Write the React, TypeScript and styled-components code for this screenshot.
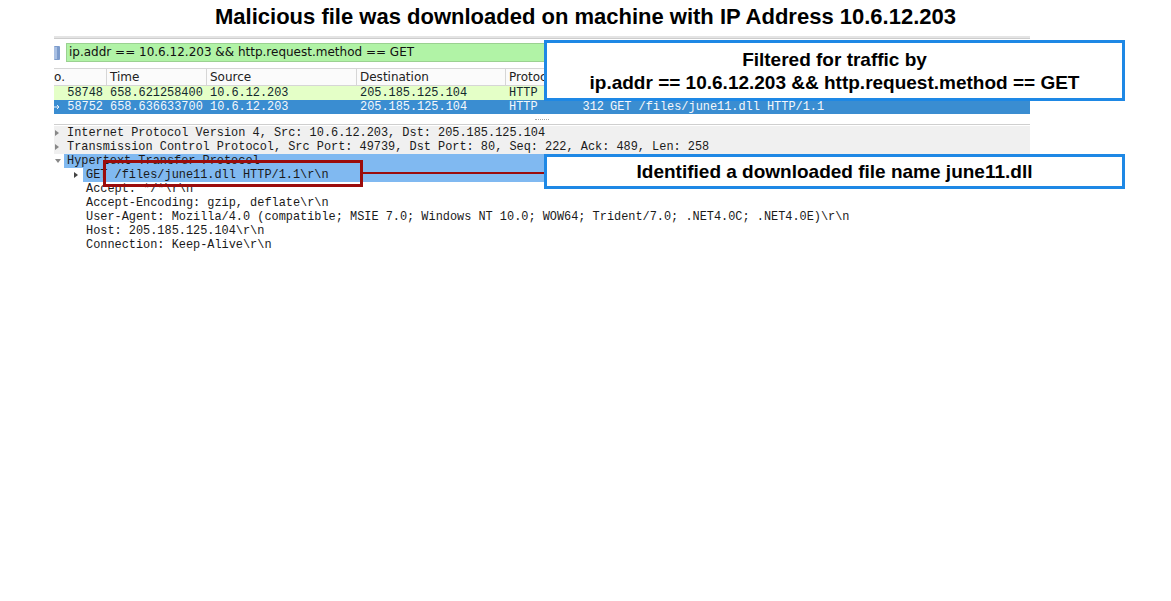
import React from "react";
import styled, { createGlobalStyle } from "styled-components";

const Global = createGlobalStyle`
  html, body { margin: 0; padding: 0; background: #ffffff; }
  body { font-family: "Liberation Sans", Arial, sans-serif; }
`;

const Page = styled.div`
  position: relative;
  width: 1171px;
  height: 601px;
  overflow: hidden;
  background: #fff;
`;

const Title = styled.h1`
  margin: 0;
  height: 36px;
  line-height: 34px;
  text-align: center;
  font-family: "Liberation Sans", Arial, sans-serif;
  font-weight: 700;
  font-size: 22px;
  color: #000;
`;

const Capture = styled.div`
  margin-left: 54px;
  width: 976px;
  display: flex;
  flex-direction: column;
`;

const TopRule = styled.div`
  height: 2px;
  background: #e4e4e4;
  border-bottom: 1px solid #cdcdcd;
`;

const FilterRow = styled.div`
  display: flex;
  align-items: stretch;
  height: 19px;
  margin-top: 4px;
  gap: 3px;
`;

const BookmarkBox = styled.div`
  width: 9px;
  display: flex;
  align-items: center;
`;

const FilterInput = styled.div`
  flex: 1;
  background: #b1f3a6;
  border: 1px solid #9bd191;
  box-sizing: border-box;
  padding-left: 2px;
  font-family: "DejaVu Sans", sans-serif;
  font-size: 12px;
  line-height: 17px;
  color: #111;
  white-space: nowrap;
`;

const ListHeader = styled.div`
  display: grid;
  grid-template-columns: 53px 100px 150px 149px 54px 47px 1fr;
  height: 18px;
  margin-top: 6px;
  border-top: 1px solid #d6d6d6;
  border-bottom: 1px solid #d6d6d6;
  box-sizing: border-box;
  background: #fbfbfb;
`;

const HeadCell = styled.div<{ $flush?: boolean }>`
  font-family: "DejaVu Sans", sans-serif;
  font-size: 12px;
  line-height: 16px;
  color: #222;
  padding-left: ${(p) => (p.$flush ? "0" : "3px")};
  border-right: 1px solid #d6d6d6;
  white-space: nowrap;
  overflow: hidden;
`;

const PacketRow = styled.div<{ $bg: string; $fg: string }>`
  display: grid;
  grid-template-columns: 53px 100px 150px 149px 54px 47px 1fr;
  height: 14px;
  background: ${(p) => p.$bg};
  color: ${(p) => p.$fg};
  font-family: "Liberation Mono", monospace;
  font-size: 11.9px;
  line-height: 14px;
  white-space: nowrap;
`;

const Cell = styled.div<{ $right?: boolean }>`
  display: flex;
  justify-content: ${(p) => (p.$right ? "flex-end" : "flex-start")};
  align-items: center;
  padding: ${(p) => (p.$right ? "0 3px 0 0" : "0 0 0 3px")};
  overflow: hidden;
`;

const NoCell = styled.div`
  display: flex;
  justify-content: space-between;
  align-items: center;
  padding-right: 4px;
`;

const Splitter = styled.div`
  height: 10px;
  display: flex;
  justify-content: center;
  align-items: flex-start;
  border-bottom: 1px solid #cfcfcf;
  box-sizing: border-box;
  margin-top: 1px;
`;

const Grip = styled.div`
  width: 14px;
  height: 1px;
  margin-top: 4px;
  border-top: 1px dotted #a8a8a8;
`;

const Details = styled.div`
  display: flex;
  flex-direction: column;
  margin-top: 1px;
`;

const DetailRow = styled.div<{ $indent: number; $bg?: string }>`
  display: flex;
  height: 14px;
  padding-left: ${(p) => p.$indent}px;
  background: ${(p) => p.$bg || "transparent"};
  font-family: "Liberation Mono", monospace;
  font-size: 11.9px;
  line-height: 14px;
  color: #1a1a1a;
  white-space: nowrap;
`;

const Toggle = styled.div`
  width: 10px;
  display: flex;
  align-items: center;
  padding-left: 1px;
  box-sizing: border-box;
`;

const Caret = styled.span<{ $open?: boolean; $dark?: boolean }>`
  width: 0;
  height: 0;
  ${(p) =>
    p.$open
      ? `border-top: 4px solid ${p.$dark ? "#444" : "#888"};
         border-left: 3px solid transparent;
         border-right: 3px solid transparent;`
      : `border-left: 4px solid ${p.$dark ? "#444" : "#888"};
         border-top: 3px solid transparent;
         border-bottom: 3px solid transparent;`}
`;

const Label = styled.div<{ $bg?: string }>`
  flex: 1;
  padding-left: 3px;
  background: ${(p) => p.$bg || "transparent"};
`;

const Callout = styled.div<{ $top: number; $height: number }>`
  position: absolute;
  left: 544px;
  top: ${(p) => p.$top}px;
  width: 581px;
  height: ${(p) => p.$height}px;
  box-sizing: border-box;
  border: 3px solid #1e88e5;
  background: #fff;
  display: flex;
  flex-direction: column;
  align-items: center;
  justify-content: center;
  font-family: "Liberation Sans", Arial, sans-serif;
  font-weight: 700;
  font-size: 19px;
  line-height: 23px;
  color: #000;
  white-space: nowrap;
`;

const Highlight = styled.div`
  position: absolute;
  left: 103px;
  top: 160px;
  width: 260px;
  height: 27px;
  box-sizing: border-box;
  border: 3px solid #9b0c0c;
`;

const Connector = styled.div`
  position: absolute;
  left: 363px;
  top: 172px;
  width: 182px;
  height: 2px;
  background: #9b0c0c;
`;

const Bookmark = () => (
  <svg width="7" height="14" viewBox="0 0 7 14">
    <rect x="0" y="0" width="6" height="14" rx="1" fill="#7d9ccc" />
    <rect x="0" y="1" width="3" height="12" fill="#a9c0e3" />
  </svg>
);

const RelArrow = () => (
  <svg width="6" height="6" viewBox="0 0 6 6">
    <path d="M0 3 H5 M3 1 L5 3 L3 5" stroke="#e8f0fa" strokeWidth="1" fill="none" />
  </svg>
);

const headers = ["o.", "Time", "Source", "Destination", "Protocol", "Length", "Info"];

const details: { indent: number; text: string; open?: boolean; toggle?: boolean; dark?: boolean; rowBg?: string; labelBg?: string }[] = [
  { indent: 0, text: "Internet Protocol Version 4, Src: 10.6.12.203, Dst: 205.185.125.104", toggle: true, rowBg: "#f0f0f0" },
  { indent: 0, text: "Transmission Control Protocol, Src Port: 49739, Dst Port: 80, Seq: 222, Ack: 489, Len: 258", toggle: true, rowBg: "#f0f0f0" },
  { indent: 0, text: "Hypertext Transfer Protocol", toggle: true, open: true, labelBg: "#80b9f1" },
  { indent: 19, text: "GET /files/june11.dll HTTP/1.1\\r\\n", toggle: true, dark: true, labelBg: "#80b9f1" },
  { indent: 19, text: "Accept: */*\\r\\n" },
  { indent: 19, text: "Accept-Encoding: gzip, deflate\\r\\n" },
  { indent: 19, text: "User-Agent: Mozilla/4.0 (compatible; MSIE 7.0; Windows NT 10.0; WOW64; Trident/7.0; .NET4.0C; .NET4.0E)\\r\\n" },
  { indent: 19, text: "Host: 205.185.125.104\\r\\n" },
  { indent: 19, text: "Connection: Keep-Alive\\r\\n" },
];

export default function App() {
  return (
    <>
      <Global />
      <Page>
        <Title>Malicious file was downloaded on machine with IP Address 10.6.12.203</Title>
        <Capture>
          <TopRule />
          <FilterRow>
            <BookmarkBox>
              <Bookmark />
            </BookmarkBox>
            <FilterInput>ip.addr == 10.6.12.203 &amp;&amp; http.request.method == GET</FilterInput>
          </FilterRow>
          <ListHeader>
            {headers.map((h, i) => (
              <HeadCell key={h} $flush={i === 0}>
                {h}
              </HeadCell>
            ))}
          </ListHeader>
          <PacketRow $bg="#e4ffc7" $fg="#12272e">
            <NoCell>
              <span />
              <span>58748</span>
            </NoCell>
            <Cell>658.621258400</Cell>
            <Cell>10.6.12.203</Cell>
            <Cell>205.185.125.104</Cell>
            <Cell>HTTP</Cell>
            <Cell $right>312</Cell>
            <Cell>GET /files/june11.dll HTTP/1.1</Cell>
          </PacketRow>
          <PacketRow $bg="#3a8dd1" $fg="#f4f8fc">
            <NoCell>
              <RelArrow />
              <span>58752</span>
            </NoCell>
            <Cell>658.636633700</Cell>
            <Cell>10.6.12.203</Cell>
            <Cell>205.185.125.104</Cell>
            <Cell>HTTP</Cell>
            <Cell $right>312</Cell>
            <Cell>GET /files/june11.dll HTTP/1.1</Cell>
          </PacketRow>
          <Splitter>
            <Grip />
          </Splitter>
          <Details>
            {details.map((d, i) => (
              <DetailRow key={i} $indent={d.indent} $bg={d.rowBg}>
                <Toggle>{d.toggle && <Caret $open={d.open} $dark={d.dark} />}</Toggle>
                <Label $bg={d.labelBg}>{d.text}</Label>
              </DetailRow>
            ))}
          </Details>
        </Capture>
        <Highlight />
        <Connector />
        <Callout $top={40} $height={61}>
          <div>Filtered for traffic by</div>
          <div>ip.addr == 10.6.12.203 &amp;&amp; http.request.method == GET</div>
        </Callout>
        <Callout $top={154} $height={35}>
          <div>Identified a downloaded file name june11.dll</div>
        </Callout>
      </Page>
    </>
  );
}
